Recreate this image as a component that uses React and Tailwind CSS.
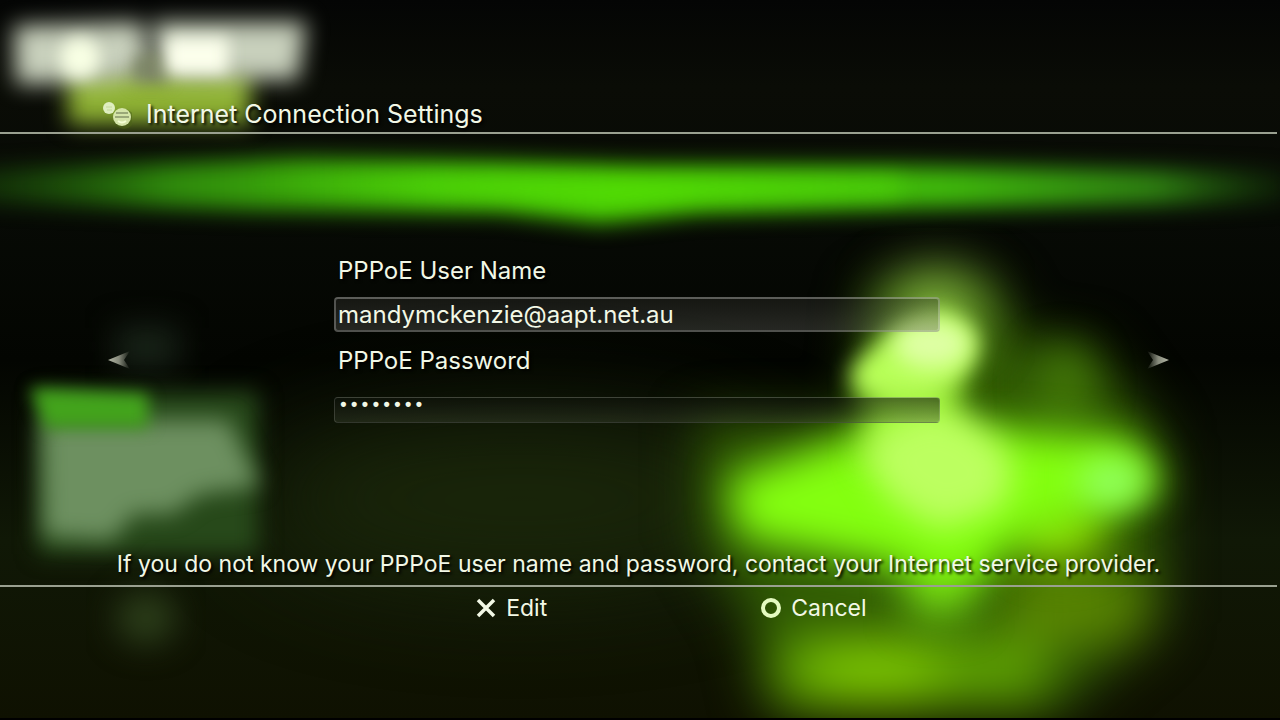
function Backdrop() {
    return (
        <svg
            className="absolute inset-0 size-full"
            viewBox="0 0 1280 720"
            preserveAspectRatio="none"
            colorInterpolationFilters="sRGB"
            aria-hidden="true"
        >
            <defs>
                <linearGradient id="base" x1="0" y1="0" x2="0" y2="1">
                    <stop offset="0" stopColor="#040504" />
                    <stop offset="0.12" stopColor="#0a0c06" />
                    <stop offset="0.3" stopColor="#070a05" />
                    <stop offset="0.5" stopColor="#030501" />
                    <stop offset="0.75" stopColor="#101806" />
                    <stop offset="1" stopColor="#0f1101" />
                </linearGradient>
                <linearGradient id="band" x1="0" y1="0" x2="1" y2="0">
                    <stop offset="0" stopColor="#1f5a0c" stopOpacity="0.4" />
                    <stop offset="0.15" stopColor="#2f8a0c" />
                    <stop offset="0.35" stopColor="#44c408" />
                    <stop offset="0.5" stopColor="#4cd404" />
                    <stop offset="0.75" stopColor="#3fb80c" />
                    <stop offset="0.9" stopColor="#2f8212" />
                    <stop offset="1" stopColor="#1f5a0c" stopOpacity="0.2" />
                </linearGradient>
                <filter id="b8" x="-50%" y="-100%" width="200%" height="300%">
                    <feGaussianBlur stdDeviation="8" />
                </filter>
                <filter id="b11" x="-50%" y="-100%" width="200%" height="300%">
                    <feGaussianBlur stdDeviation="11" />
                </filter>
                <filter id="b16" x="-50%" y="-100%" width="200%" height="300%">
                    <feGaussianBlur stdDeviation="16" />
                </filter>
                <filter id="b20" x="-100%" y="-100%" width="300%" height="300%">
                    <feGaussianBlur stdDeviation="20" />
                </filter>
                <filter id="b26" x="-50%" y="-50%" width="200%" height="200%">
                    <feGaussianBlur stdDeviation="26" />
                </filter>
                <filter id="b50" x="-50%" y="-150%" width="200%" height="400%">
                    <feGaussianBlur stdDeviation="50" />
                </filter>
            </defs>
            <rect width="1280" height="720" fill="url(#base)" />
            <ellipse cx="520" cy="500" rx="260" ry="80" fill="#1a260a" filter="url(#b50)" />

            {/* game logo */}
            <rect x="68" y="66" width="182" height="58" fill="#8fb234" filter="url(#b11)" />
            <g filter="url(#b11)">
                <path d="M14 26 L142 22 L150 72 L110 82 L16 84 Z" fill="#c8d0bc" />
                <path d="M152 22 L306 22 L298 80 L165 78 Z" fill="#c8d0bc" />
            </g>
            <rect x="134" y="56" width="34" height="26" fill="#7c8468" filter="url(#b8)" />
            <circle cx="80" cy="58" r="20" fill="#f8ffe4" filter="url(#b8)" />
            <rect x="166" y="38" width="62" height="36" fill="#fcffec" filter="url(#b8)" />

            {/* horizon band */}
            <path
                d="M-30 170 L300 158 L500 162 L640 166 L900 166 L1290 172 L1290 202 L900 209 L700 213 L600 223 L500 212 L250 210 L-30 202 Z"
                fill="url(#band)"
                filter="url(#b11)"
            />
            <path
                d="M250 180 L500 178 L620 180 L900 180 L900 194 L600 200 L480 196 Z"
                fill="#58e404"
                opacity="0.6"
                filter="url(#b11)"
            />

            {/* lobby panel */}
            <rect x="116" y="328" width="62" height="38" fill="#1a261a" filter="url(#b16)" />
            <rect x="38" y="392" width="220" height="162" fill="#27491a" filter="url(#b11)" />
            <path
                d="M42 420 L150 420 L228 420 L260 486 L200 494 L172 514 L134 514 L112 540 L44 536 Z"
                fill="#6d9060"
                filter="url(#b11)"
            />
            <path d="M30 388 L148 394 L148 428 L46 428 Z" fill="#43a41c" filter="url(#b8)" />
            <ellipse cx="146" cy="618" rx="30" ry="26" fill="#2c3e1a" filter="url(#b16)" />

            {/* soldier glow */}
            <g filter="url(#b26)">
                <path
                    d="M700 420 L860 420 L870 290 L990 280 L1020 340 L1090 345 L1160 440 L1160 620 L1060 710 L770 710 L750 620 L700 540 Z"
                    fill="#305a04"
                />
                <rect x="1010" y="575" width="135" height="66" fill="#5c8802" />
                <rect x="775" y="640" width="270" height="66" fill="#5fa402" />
                <ellipse cx="875" cy="672" rx="70" ry="32" fill="#82d000" />
            </g>
            <rect x="908" y="540" width="62" height="80" fill="#6cc812" filter="url(#b20)" />
            <ellipse cx="1065" cy="384" rx="26" ry="38" fill="#437808" filter="url(#b20)" />
            <ellipse cx="1060" cy="530" rx="46" ry="36" fill="#84c800" filter="url(#b20)" />
            <path
                d="M725 480 L860 432 L1010 428 L1130 438 L1166 486 L1090 520 L1020 542 L965 590 L890 566 L740 538 Z"
                fill="#84ff10"
                filter="url(#b20)"
            />
            <ellipse cx="1112" cy="482" rx="34" ry="24" fill="#90ff5c" filter="url(#b16)" />
            <ellipse cx="935" cy="312" rx="50" ry="42" fill="#7eb03c" filter="url(#b26)" />
            <rect x="866" y="376" width="92" height="84" fill="#9cf830" filter="url(#b16)" />
            <path
                d="M862 455 Q880 420 935 408 Q990 420 1010 458 Q1016 500 990 512 L940 530 L890 500 Z"
                fill="#bcff60"
                filter="url(#b16)"
            />
            <path
                d="M850 372 Q880 328 938 310 Q980 322 978 350 Q968 386 935 398 Q890 406 856 392 Z"
                fill="#b8ff58"
                filter="url(#b11)"
            />
            <ellipse cx="932" cy="344" rx="38" ry="24" fill="#deffa4" filter="url(#b11)" />
            <rect y="718" width="1280" height="2" fill="#000" />
        </svg>
    );
}

function NetworkIcon() {
    return (
        <svg width="30" height="28" viewBox="0 0 30 28" className="shrink-0" aria-hidden="true">
            <circle cx="7" cy="6" r="6" fill="#dfeec0" />
            <path d="M4 5h6M5 8h5" stroke="#c4d89a" strokeWidth="1" />
            <circle cx="22" cy="17" r="10" fill="#4c6418" opacity="0.5" />
            <circle cx="20" cy="15" r="9" fill="#d4e4a8" />
            <path d="M14 11h12M13 15h14" stroke="#9aa878" strokeWidth="2" />
            <path d="M16 19q4 3 8 0" stroke="#f4ffd4" strokeWidth="2" fill="none" />
        </svg>
    );
}

function Arrow({ label, flip }) {
    return (
        <button type="button" aria-label={label} className={flip ? 'rotate-180' : ''}>
            <svg width="24" height="18" viewBox="0 0 24 18" className="block" aria-hidden="true">
                <defs>
                    <linearGradient id="arrow" x1="0" y1="0" x2="1" y2="0">
                        <stop offset="0" stopColor="#b4b8a6" />
                        <stop offset="0.5" stopColor="#85897a" />
                        <stop offset="1" stopColor="#85897a" stopOpacity="0" />
                    </linearGradient>
                </defs>
                <path d="M1 9 L23 0 L17 9 L23 18 Z" fill="url(#arrow)" />
            </svg>
        </button>
    );
}

export default function App() {
    return (
        <div className="relative flex min-h-screen flex-col bg-black font-['Inter',sans-serif] text-[23px] leading-8 text-[#f2f8e6] [text-shadow:2px_2px_3px_#000]">
            <Backdrop />

            <header className="relative mr-[3px] flex h-[134px] items-end gap-[14px] border-b-2 border-[#9aa090] pb-[2px] pl-[102px] text-[25px]">
                <NetworkIcon />
                <h1>Internet Connection Settings</h1>
            </header>

            <main className="relative flex flex-1 flex-col">
                <div className="flex flex-1 items-center justify-between pt-12 pr-[110px] pl-[107px]">
                    <Arrow label="Previous" />
                    <form className="mr-[3px] flex w-[606px] flex-col pb-[42px] text-[24px]">
                        <label htmlFor="user" className="pl-1">
                            PPPoE User Name
                        </label>
                        <input
                            id="user"
                            type="text"
                            defaultValue="mandymckenzie@aapt.net.au"
                            className="mt-[10px] h-[35px] rounded border-2 border-white/25 bg-linear-to-b from-[#30302c]/40 to-[#5a5a54]/40 px-[2px] outline-none"
                        />
                        <label htmlFor="password" className="mt-[13px] pl-1">
                            PPPoE Password
                        </label>
                        <input
                            id="password"
                            type="password"
                            defaultValue="password"
                            className="mt-5 h-[26px] rounded border border-white/15 bg-linear-to-b from-[#10140c]/60 to-[#3c4432]/40 px-[3px] pb-[8px] font-['Liberation_Mono',monospace] text-[18px] font-bold leading-4 outline-none"
                        />
                    </form>
                    <Arrow label="Next" flip />
                </div>
                <p className="mr-[3px] h-12 px-4 pt-[11px] text-center">
                    If you do not know your PPPoE user name and password, contact your Internet service provider.
                </p>
            </main>

            <footer className="relative mr-[3px] flex h-[135px] gap-[214px] border-t-2 border-[#9aa090] pt-[5px] pl-[37.2%]">
                <button type="button" className="flex h-8 items-center gap-[10px]">
                    <svg width="20" height="20" viewBox="0 0 20 20" aria-hidden="true">
                        <path d="M2 2 L18 18 M18 2 L2 18" stroke="#f2f8e6" strokeWidth="3.5" />
                    </svg>
                    Edit
                </button>
                <button type="button" className="flex h-8 items-center gap-[10px]">
                    <svg width="20" height="20" viewBox="0 0 20 20" aria-hidden="true">
                        <circle cx="10" cy="10" r="8" fill="none" stroke="#e4fac0" strokeWidth="4" />
                    </svg>
                    Cancel
                </button>
            </footer>
        </div>
    );
}
